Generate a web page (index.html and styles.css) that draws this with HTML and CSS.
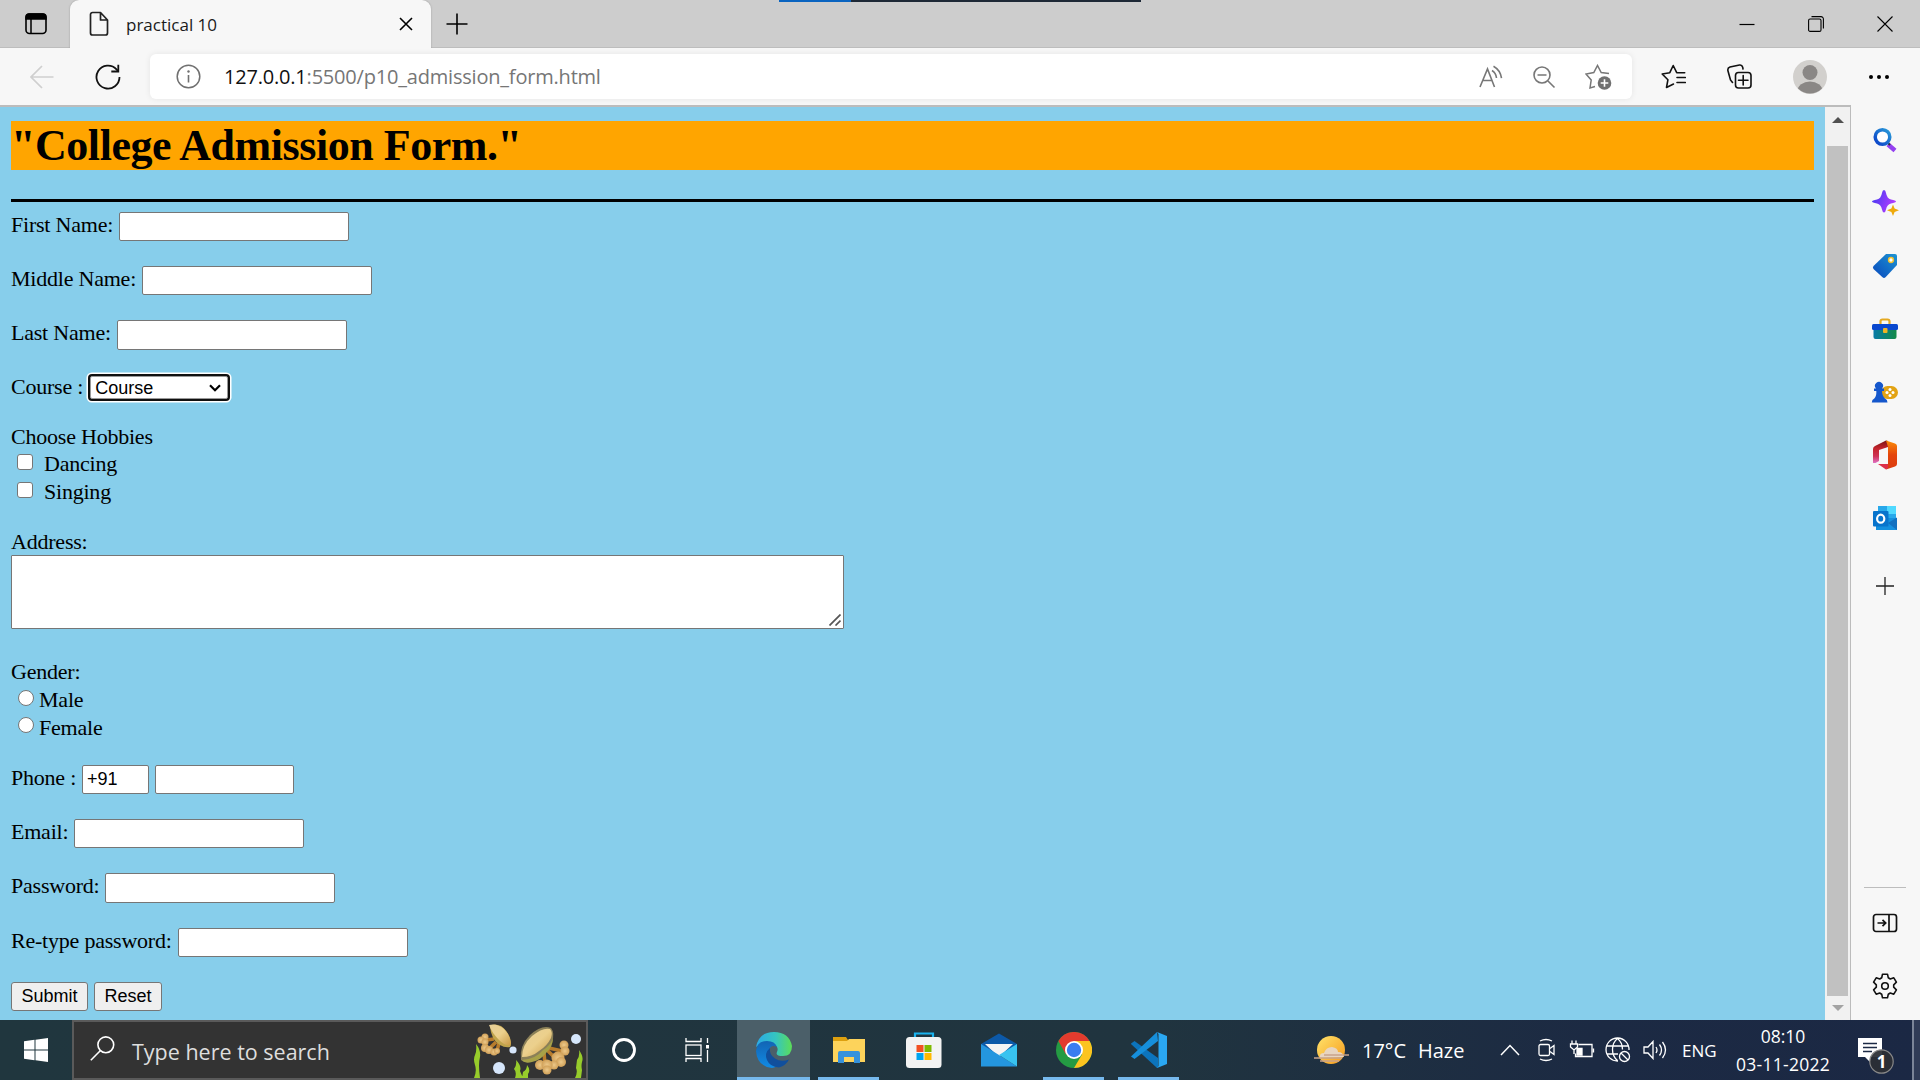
FILE: index.html
```html
<!DOCTYPE html>
<html lang="en">
<head>
<meta charset="utf-8">
<title>practical 10</title>
<link rel="stylesheet" href="styles.css">
</head>
<body>
<div class="screen">
  <header class="tabbar">
    <div class="tab-actions">
      <svg width="24" height="24" viewBox="0 0 24 24"><rect x="2" y="2" width="20" height="19.5" rx="3.5" fill="none" stroke="#000" stroke-width="1.6"/><path d="M2 7V5a3 3 0 0 1 3-3h14a3 3 0 0 1 3 3v2zM7 7v14" stroke="#000" stroke-width="1.5"/></svg>
    </div>
    <div class="tab">
      <svg class="doc" width="20" height="26" viewBox="0 0 20 26"><path d="M3.5 1.5h8l7 7.500v13a2 2 0 0 1-2 2h-13a2 2 0 0 1-2-2v-18.500a2 2 0 0 1 2-2zM11.500 1.500v7.500h7" fill="none" stroke="#222" stroke-width="1.7" stroke-linejoin="round"/></svg>
      <span class="tab-title">practical 10</span>
      <svg width="14" height="14" viewBox="0 0 14 14"><path d="M1 1l12 12M13 1L1 13" stroke="#000" stroke-width="1.6"/></svg>
    </div>
    <svg class="newtab" width="22" height="22" viewBox="0 0 22 22"><path d="M11 .5v21M.5 11h21" stroke="#000" stroke-width="1.6"/></svg>
    <div class="winctl">
      <svg width="16" height="16" viewBox="0 0 16 16"><path d="M.5 8.500h15" stroke="#000" stroke-width="1.200"/></svg>
      <svg width="16" height="16" viewBox="0 0 16 16"><rect x=".6" y="3" width="12.400" height="12.400" rx="1.500" fill="none" stroke="#000" stroke-width="1.100"/><path d="M3.500.6h9.500a2.400 2.400 0 0 1 2.400 2.400v9.500" fill="none" stroke="#000" stroke-width="1.100"/></svg>
      <svg width="16" height="16" viewBox="0 0 16 16"><path d="M.5.5l15 15M15.500.5l-15 15" stroke="#000" stroke-width="1.100"/></svg>
    </div>
    <div class="capture"></div>
  </header>

  <div class="toolbar">
    <svg class="back" width="24" height="24" viewBox="0 0 24 24"><path d="M23.500 12H1M12 1L1 12l11 11" fill="none" stroke="#cfcfcf" stroke-width="1.700"/></svg>
    <svg class="reload" width="26" height="26" viewBox="0 0 26 26"><path d="M24.500 13A11.500 11.500 0 1 1 21.500 5.300L23 7" fill="none" stroke="#111" stroke-width="1.800"/><path d="M23.300.8v6.700h-7" fill="none" stroke="#111" stroke-width="1.800"/></svg>
    <div class="address">
      <svg width="25" height="25" viewBox="0 0 25 25"><circle cx="12.500" cy="12.500" r="11.300" fill="none" stroke="#707070" stroke-width="1.500"/><path d="M12.500 11v7.500" stroke="#707070" stroke-width="1.600"/><circle cx="12.500" cy="7.500" r="1.200" fill="#707070"/></svg>
      <span class="url"><b>127.0.0.1</b>:5500/p10_admission_form.html</span>
      <div class="addr-icons">
        <svg width="24" height="24" viewBox="0 0 24 24" fill="none" stroke="#777" stroke-width="1.600"><path d="M1 22L8.500 4l7 18M3.800 15.500h9.400M13 5.500q4 2.500 4.500 7.500M14.500 1.200q7 4 8 12"/></svg>
        <svg width="24" height="24" viewBox="0 0 24 24" fill="none" stroke="#777" stroke-width="1.600"><circle cx="10" cy="10" r="8"/><path d="M16 16l6.500 6.500M5.500 10h9"/></svg>
        <svg width="27" height="26" viewBox="0 0 27 26"><path d="M10 22.500L5 24l1.200-8L1 10l7.800-1.400L12.500 1.500l3.700 7.100L24 9.500" fill="none" stroke="#777" stroke-width="1.500"/><circle cx="19.500" cy="19" r="6.800" fill="#707070"/><path d="M19.500 15.200v7.600M15.700 19h7.600" stroke="#fff" stroke-width="1.600"/></svg>
      </div>
    </div>
    <div class="tools">
      <svg width="25" height="25" viewBox="0 0 25 25" fill="none" stroke="#111" stroke-width="1.600" stroke-linejoin="round" stroke-linecap="round"><path d="M12.500 20L5.500 23.500l1.400-7.700L1.200 10l7.600-1.300L12.200 1.500l3.500 7.200h8M16 13.500h8.300M16 18.500h8.300"/></svg>
      <svg width="25" height="25" viewBox="0 0 25 25" fill="none" stroke="#111" stroke-width="1.600" stroke-linecap="round"><path d="M5.500 18.500L3.500 16 1 7q-.8-3 2-4l9.500-2q2.500-.4 3.200 2.200L16 5"/><rect x="8.500" y="8.500" width="15.500" height="15.500" rx="3"/><path d="M16.200 11.500v9.500M11.500 16.200H21"/></svg>
      <svg width="34" height="34" viewBox="0 0 34 34"><defs><clipPath id="av"><circle cx="17" cy="17" r="16.500"/></clipPath></defs><circle cx="17" cy="17" r="17" fill="#d2d0cd"/><g clip-path="url(#av)" fill="#8a8785"><circle cx="17" cy="12.500" r="7.500"/><ellipse cx="17" cy="31" rx="12.500" ry="9.500"/></g></svg>
      <svg width="20" height="6" viewBox="0 0 20 6"><circle cx="2" cy="3" r="2"/><circle cx="10" cy="3" r="2"/><circle cx="18" cy="3" r="2"/></svg>
    </div>
  </div>

  <div class="middle">
    <main class="page">
      <h1>"College Admission Form."</h1>
      <hr>
      <form class="form">
        <div class="row"><label>First Name:</label><input type="text"></div>
        <div class="row"><label>Middle Name:</label><input type="text"></div>
        <div class="row"><label>Last Name:</label><input class="tall" type="text"></div>
        <div class="row course"><label>Course :</label><div class="select"><span>Course</span><svg width="12" height="8" viewBox="0 0 12 8"><path d="M1 1.200l5 5 5-5" fill="none" stroke="#000" stroke-width="2.200"/></svg></div></div>
        <div class="row hobbies">Choose Hobbies</div>
        <div class="row check"><i class="box"></i><label>Dancing</label></div>
        <div class="row check last"><i class="box"></i><label>Singing</label></div>
        <div class="row addr">Address:</div>
        <div class="area-row"><div class="area"><svg width="12" height="12" viewBox="0 0 12 12"><path d="M.5 11.500L11.500.5M6.500 11.500l5-5" stroke="#555" stroke-width="1.700"/></svg></div></div>
        <div class="row line">Gender:</div>
        <div class="row radio"><i class="dot"></i><label>Male</label></div>
        <div class="row radio last"><i class="dot"></i><label>Female</label></div>
        <div class="row"><label>Phone :</label><input class="code" type="text" value="+91"><input class="phone" type="text"></div>
        <div class="row"><label>Email:</label><input type="text"></div>
        <div class="row pass"><label>Password:</label><input class="tall" type="text"></div>
        <div class="row"><label>Re-type password:</label><input type="text"></div>
        <div class="buttons"><button type="button" class="submit">Submit</button><button type="button" class="reset">Reset</button></div>
      </form>
    </main>
    <div class="scrollbar">
      <svg width="12" height="6" viewBox="0 0 12 6"><path d="M0 6L6 0l6 6z" fill="#505050"/></svg>
      <div class="thumb"></div>
      <svg width="12" height="6" viewBox="0 0 12 6"><path d="M0 0l6 6 6-6z" fill="#a3a3a3"/></svg>
    </div>
    <aside class="side">
      <div class="s"><svg width="26" height="26" viewBox="0 0 26 26"><defs><linearGradient id="g1" x1="1" y1="0" x2="0" y2="1"><stop offset="0" stop-color="#2a9bd8"/><stop offset="1" stop-color="#0a3fc8"/></linearGradient></defs><path d="M16 17.500l7 6" stroke="#9440f0" stroke-width="4.500"/><path d="M15 15l3 3" stroke="#333" stroke-width="2"/><circle cx="10.500" cy="10" r="7.300" fill="#fff" stroke="url(#g1)" stroke-width="3.500"/></svg></div>
      <div class="s"><svg width="28" height="28" viewBox="0 0 28 28"><defs><linearGradient id="g2" x1="0" y1="0" x2="1" y2=".4"><stop offset="0" stop-color="#3b3af0"/><stop offset="1" stop-color="#b13cff"/></linearGradient></defs><path d="M13 1q1.500 0 2 3 1 5.500 5 6.500 5 1 5 2t-5 2q-4 1-5 6-.6 3-2 3t-2-3q-1-5-5-6-5-1-5-2t5-2q4-1 5-6.500.5-3 2-3z" fill="url(#g2)"/><path d="M22 15.500l1.600 4 4.400 1.700-4.400 1.700-1.600 4-1.600-4-4.400-1.700 4.400-1.700z" fill="#efaa0c"/></svg></div>
      <div class="s"><svg width="26" height="26" viewBox="0 0 26 26"><defs><linearGradient id="g3" x1="1" y1="0" x2="0" y2="1"><stop offset="0" stop-color="#1e94d2"/><stop offset="1" stop-color="#0848bd"/></linearGradient></defs><path d="M14 1h9q2 0 2 2v9L13.500 24.300q-1.500 1.200-3 0L1.500 16q-1.200-1.500 0-3z" fill="url(#g3)"/><circle cx="19" cy="7" r="2.400" fill="#fff" stroke="#f2c230" stroke-width="1.500"/></svg></div>
      <div class="s"><svg width="28" height="22" viewBox="0 0 28 22"><defs><linearGradient id="g4"><stop offset="0" stop-color="#087aa8"/><stop offset="1" stop-color="#128a46"/></linearGradient></defs><path d="M9.500 7V3.500q0-2 2-2h5q2 0 2 2V7" fill="none" stroke="#e5a921" stroke-width="2.200"/><rect x="2.500" y="9" width="23" height="12" rx="2" fill="url(#g4)"/><rect x="1" y="6" width="26" height="6" rx="1.500" fill="#0a48ce"/><rect x="12" y="10" width="4.500" height="5" rx="1" fill="#f0b423"/></svg></div>
      <div class="s"><svg width="28" height="24" viewBox="0 0 28 24"><rect x="10" y="6" width="17" height="13" rx="6.500" fill="#e2a314"/><g fill="#fff"><circle cx="19" cy="9.500" r="1.500"/><circle cx="19" cy="15.500" r="1.500"/><circle cx="16" cy="12.500" r="1.500"/><circle cx="22" cy="12.500" r="1.500"/></g><path d="M5 8.500a4 4 0 1 1 6 0h2v2.500h-2q0 5 3 7.500 2.500 1 2.500 4H.8q0-3 2.500-4 2.500-2.500 2-7.500H3V8.500z" fill="#1557cc"/></svg></div>
      <div class="s"><svg width="26" height="30" viewBox="0 0 26 30"><defs><linearGradient id="g5" x1="0" y1="0" x2="0" y2="1"><stop offset="0" stop-color="#7c1414"/><stop offset=".35" stop-color="#c4242c"/><stop offset=".7" stop-color="#cf3457"/><stop offset="1" stop-color="#e072c4"/></linearGradient><linearGradient id="g6" x1="0" y1="0" x2="0" y2="1"><stop offset="0" stop-color="#fb8c08"/><stop offset=".5" stop-color="#e4450c"/><stop offset="1" stop-color="#dc3c10"/></linearGradient></defs><path d="M14 .5l2 .5v6L7 10v11l-3.500 2H1V9q0-2 2-3z" fill="url(#g5)"/><path d="M14 .5l9 3q2 .7 2 2.500v18q0 1.700-2 2.500l-9 3 2-3V7z" fill="url(#g6)"/><path d="M6 24h10v4l-2 1.500z" fill="#dc3049"/></svg></div>
      <div class="s"><svg width="26" height="26" viewBox="0 0 26 26"><path d="M6 1h18v14H6z" fill="#28a8ea"/><path d="M15 1h9v8h-9z" fill="#50d9ff"/><path d="M4 13h21v12H4z" fill="#1490df"/><path d="M16 18l9-5.500V25z" fill="#1270c0"/><rect x="1" y="6" width="15.500" height="15.500" rx="1" fill="#0874cc"/><ellipse cx="8.700" cy="13.700" rx="3.600" ry="4" fill="none" stroke="#fff" stroke-width="2.200"/></svg></div>
      <div class="s plus"><svg width="18" height="18" viewBox="0 0 18 18"><path d="M9 0v18M0 9h18" stroke="#222" stroke-width="1.300"/></svg></div>
      <div class="side-line"></div>
      <div class="s"><svg width="26" height="20" viewBox="0 0 26 20" fill="none" stroke="#111" stroke-width="1.700"><rect x="1.500" y="1.500" width="23" height="17" rx="2.500"/><path d="M17 1.500v17M5.500 10h8M10.500 6.800l3.200 3.200-3.200 3.200"/></svg></div>
      <div class="s"><svg width="26" height="26" viewBox="0 0 26 26" fill="none" stroke="#111" stroke-width="1.600" stroke-linejoin="round"><path d="M10.500 1.200h5l.8 3.600 2 1.200 3.500-1.200 2.600 4.400-2.700 2.600v2.400l2.700 2.600-2.600 4.400-3.500-1.200-2 1.200-.8 3.600h-5l-.8-3.600-2-1.200-3.500 1.200-2.600-4.400 2.700-2.600v-2.400L1.600 9.200l2.600-4.400L7.700 6l2-1.200z"/><circle cx="13" cy="13" r="3.300"/></svg></div>
    </aside>
  </div>

  <footer class="taskbar">
    <div class="start"><svg width="24" height="24" viewBox="0 0 24 24" fill="#fff"><path d="M0 3.300L10.500 1.800v9.700H0zM11.500 1.700L24 0v11.500H11.500zM0 12.500h10.500v9.700L0 20.700zM11.500 12.500H24V24l-12.500-1.700z"/></svg></div>
    <div class="search">
      <svg width="25" height="25" viewBox="0 0 25 25" fill="none" stroke="#fff" stroke-width="1.600"><circle cx="15.800" cy="8.800" r="7.900"/><path d="M10.500 14.500L.8 24.300"/></svg>
      <span>Type here to search</span>
      <svg class="mush" width="112" height="56" viewBox="0 0 112 56">
        <defs><linearGradient id="m1" x1="0" y1="0" x2="1" y2="1"><stop offset="0" stop-color="#e6cf97"/><stop offset=".5" stop-color="#ecd08c"/><stop offset="1" stop-color="#c99a45"/></linearGradient><radialGradient id="m2"><stop offset="0" stop-color="#edc98a"/><stop offset="1" stop-color="#d0a058"/></radialGradient></defs>
        <g stroke="#b87c2c" stroke-width="3.500"><path d="M20 17l-8 1M22 20l-6 6M25 21l-2 8M75 26l13 3M70 30l1 13M73 28l10 10"/></g>
        <g fill="url(#m2)"><circle cx="11" cy="15" r="3.500"/><circle cx="7" cy="18" r="3.500"/><circle cx="11" cy="20" r="3.500"/><circle cx="11" cy="26" r="4"/><circle cx="15" cy="28" r="4"/><circle cx="20" cy="30" r="3.500"/><circle cx="23" cy="29" r="3"/><circle cx="90" cy="23" r="4.500"/><circle cx="91" cy="29" r="4.500"/><circle cx="84" cy="36" r="6.500"/><circle cx="87" cy="40" r="5"/><circle cx="80" cy="43" r="4.500"/><circle cx="66" cy="43" r="5"/><circle cx="73" cy="43" r="5.500"/><circle cx="73" cy="48" r="4.500"/></g>
        <path d="M16 4q1 14 10 19 5 3 10 2 2-2 0-9-3-8-9-12-7-3-11 0z" fill="#c0a44c"/>
        <path d="M15 3q8-2 15 4 6 6 7 14 0 2-3 2-4 0-9-5-7-7-10-15z" fill="url(#m1)"/>
        <path d="M47 38Q45 24 56 13 68 2 77 6q4 5 1 14-5 12-20 19-7 3-11-1z" fill="#8b8058"/>
        <path d="M48 38q14-1 21-10 7-4 10-12 0 9-7 15-5 7-14 9-7 2-10-2z" fill="#a7a148"/>
        <path d="M48 35Q48 23 58 14 69 5 76 7q3 3 1 9-4 8-12 13-7 6-17 6z" fill="url(#m1)"/>
        <g fill="#97cc2b"><path d="M2 22q5 6 4 13-2 7 0 21H0q3-7 1-13t0-10q2-5 1-11zM42 38q6 6 4 11l3 7h-8q2-6-1-9 3-4 2-9zM53 43q4 5 1 9v4h-6l1-6q4-2 4-7zM105 28q5 7 3 12-1 4 0 8l-1 8h-6q3-6 1-10l1-8q3-4 2-10z"/></g>
        <g fill="#d6e6fb"><circle cx="39" cy="28" r="3.600"/><circle cx="25" cy="46" r="6"/><circle cx="102" cy="17" r="5"/></g>
      </svg>
    </div>
    <div class="tb cortana"><svg width="26" height="26" viewBox="0 0 26 26"><circle cx="13" cy="13" r="10.500" fill="none" stroke="#fff" stroke-width="2.800"/></svg></div>
    <div class="tb taskview"><svg width="26" height="24" viewBox="0 0 26 24" fill="none" stroke="#fff" stroke-width="1.300"><path d="M2 0v3.500h15V0M2 24v-3.500h15V24M23.500 0v5M23.500 12v12"/><rect x="2" y="7" width="15" height="10.500"/><path d="M23.500 7v3.500" stroke-width="3"/></svg></div>
    <div class="tb open active"><svg width="36" height="36" viewBox="0 0 36 36"><defs><linearGradient id="e1"><stop offset="0" stop-color="#2ba9e8"/><stop offset=".55" stop-color="#35c5c0"/><stop offset="1" stop-color="#5cdd58"/></linearGradient><linearGradient id="e2" x1="0" y1="0" x2="0" y2="1"><stop offset="0" stop-color="#1264b4"/><stop offset="1" stop-color="#118be4"/></linearGradient></defs><path d="M0 15Q3 0 18 0t18 14q0 10-9 10-8 0-6-4 2-5-2-7Q9 6 0 15z" fill="url(#e1)"/><path d="M0 19Q1 9 11 9q8 0 10 6-6-3-8 3-2 9 8 16-3 2-5 2Q1 34 0 19z" fill="url(#e2)"/><path d="M14 16q-6 5-3 12 3 7 12 7.500 7-2 10-8-8 3-14-1-6-4-5-10.500z" fill="#114f9c"/></svg></div>
    <div class="tb open"><svg width="32" height="28" viewBox="0 0 32 28"><path d="M0 1h13l2 3h17v22H0z" fill="#dda00f"/><path d="M0 5h14l2-2h16v23H0z" fill="#fdd35b"/><path d="M5 27V17q0-2 2-2h18q2 0 2 2v10h-6v-6H11v6z" fill="#3692dc"/></svg></div>
    <div class="tb"><svg width="36" height="36" viewBox="0 0 36 36"><path d="M9 7V1.500h18V7" fill="none" stroke="#1bb3ee" stroke-width="2.200"/><rect y="5" width="35.500" height="31" rx="3.500" fill="#f3f3f3"/><path fill="#f25022" d="M10.500 13h7v7h-7z"/><path fill="#7fba00" d="M18.500 13h7v7h-7z"/><path fill="#00a4ef" d="M10.500 21h7v7h-7z"/><path fill="#ffb900" d="M18.500 21h7v7h-7z"/></svg></div>
    <div class="tb"><svg width="36" height="36" viewBox="0 0 36 36"><path d="M0 12L18 1.500 36 12v8H0z" fill="#0c59a8"/><path d="M4 12h28L18 25z" fill="#f4f4f4"/><path d="M0 12v22.500h36L18 23z" fill="#2496df"/><path d="M36 12v22.500L18 23z" fill="#38c3f0"/></svg></div>
    <div class="tb open"><svg width="36" height="36" viewBox="0 0 36 36"><circle cx="18" cy="18" r="18" fill="#249b43"/><path d="M2.400 9A18 18 0 0 1 33.600 9H18l-8 13.500z" fill="#e33b2e"/><path d="M18 9h15.600A18 18 0 0 1 18 36l8-13.500z" fill="#fcc41f"/><circle cx="18" cy="18" r="9" fill="#fff"/><circle cx="18" cy="18" r="7.200" fill="#3a7df0"/></svg></div>
    <div class="tb open"><svg width="36" height="36" viewBox="0 0 36 36"><path d="M0 11.500L3.500 9 27 26v9.500l-1 .5L.5 12.500z" fill="#0c74bc"/><path d="M0 24.500L26 0l1 9L3.500 27z" fill="#168fdb"/><path d="M26 0l10 4v28l-10 4 1.500-2V2z" fill="#2aa7f2"/></svg></div>
    <div class="tray">
      <svg class="weather" width="36" height="30" viewBox="0 0 36 30"><defs><linearGradient id="w" x1="0" y1="0" x2="1" y2="1"><stop offset="0" stop-color="#ffe36b"/><stop offset="1" stop-color="#f79a1b"/></linearGradient></defs><circle cx="17" cy="15" r="14" fill="url(#w)"/><path d="M6 23q-1-5 4-5 2-6 8-6 6 1 6 5 5 0 6 5z" fill="#e8d5c0"/><path d="M0 23h28M10 20h25M6 26h19" stroke="#c7a38a" stroke-width="1.700"/></svg>
      <span class="temp">17°C</span><span class="haze">Haze</span>
      <svg class="caret" width="20" height="12" viewBox="0 0 20 12"><path d="M1 11l9-9.500L19 11" fill="none" stroke="#fff" stroke-width="1.500"/></svg>
      <svg class="cam" width="20" height="24" viewBox="0 0 20 24" fill="none" stroke="#fff" stroke-width="1.300"><rect x="2" y="6.500" width="10.500" height="11" rx="1.500"/><path d="M13 10.500l4-3v9l-4-3M3 3q6-3 12 0M3 21q6 3 12 0"/></svg>
      <svg class="bat" width="26" height="20" viewBox="0 0 26 20" fill="none" stroke="#fff" stroke-width="1.300"><path d="M9.500 4.500h13.500v12H6.500v-3M24.500 8.500v4M3 .5v3M7 .5v3M1.500 4h7v3l-3.500 3-3.500-3zM5 10v4"/><path d="M8 8.500h5v6.500H8z" fill="#fff"/></svg>
      <svg class="globe" width="26" height="26" viewBox="0 0 26 26" fill="none" stroke="#fff" stroke-width="1.300"><path d="M24 13A11.500 11.500 0 1 0 13 24M2 9h22M2 17h11M12.500 1.500q-5 4-5 11t5 11M12.500 1.500q5 4 5 11"/><circle cx="19.500" cy="19.500" r="5"/><path d="M16 16l7 7"/></svg>
      <svg class="vol" width="24" height="20" viewBox="0 0 24 20" fill="none" stroke="#fff" stroke-width="1.300"><path d="M1 7h4l5-5.500v17L5 13H1zM13 7q2 3 0 6M16.500 4.500q4 5.500 0 11M19.500 2q6 8 0 16"/></svg>
      <span class="eng">ENG</span>
      <div class="clock"><span>08:10</span><span class="date">03-11-2022</span></div>
      <svg class="note" width="37" height="38" viewBox="0 0 37 38"><path d="M0 0h24v19H13l-1 5-5-5H0z" fill="#fff"/><path d="M5 5.500h14M5 9.500h14M5 13.500h9" stroke="#1c2a45" stroke-width="1.300"/><circle cx="23.500" cy="23.500" r="11.700" fill="#2c2f35" fill-opacity=".94" stroke="#888" stroke-width="1.200"/><text class="count" x="23.500" y="29.500" text-anchor="middle">1</text></svg>
      <div class="desktop"></div>
    </div>
  </footer>
</div>
</body>
</html>
```
FILE: styles.css
```css
* { box-sizing: border-box; }
body { margin: 0; font-family: "Open Sans", "Noto Sans", sans-serif; overflow: hidden; }
svg { display: block; flex: none; }
.screen { width: 1920px; height: 1080px; display: flex; flex-direction: column; background: #f7f7f7; }

.tabbar { position: relative; height: 48px; flex: none; display: flex; align-items: center; background: #cdcdcd; box-shadow: inset 0 -1px #bdbdbd; }
.tab-actions { width: 70px; padding-left: 24px; }
.tab { width: 361px; height: 48px; display: flex; align-items: center; padding: 0 18px 0 19px; background: #f7f7f7; border-radius: 9px 9px 0 0; box-shadow: 0 0 2px #999; clip-path: inset(0 -3px 0 -3px); }
.tab-title { flex: 1; margin-left: 17px; font-size: 17px; color: #1a1a1a; }
.newtab { margin-left: 15px; }
.winctl { margin-left: auto; margin-right: 27px; display: flex; gap: 53px; }
.capture { position: absolute; left: 779px; top: 0; width: 362px; height: 2px; background: linear-gradient(90deg, #0a64c0 72px, #1d2836 72px); }

.toolbar { height: 57px; flex: none; display: flex; align-items: center; }
.back { margin-left: 30px; }
.reload { margin-left: 41px; }
.address { width: 1482px; height: 45px; margin-left: 29px; padding: 0 20px 0 26px; display: flex; align-items: center; background: #fff; border-radius: 6px; box-shadow: 0 0 6px rgba(0,0,0,.08); }
.url { margin-left: 23px; font-size: 20px; letter-spacing: -.2px; color: #767676; white-space: nowrap; }
.url b { font-weight: 400; color: #111; }
.addr-icons { margin-left: auto; display: flex; align-items: center; gap: 29px; }
.tools { flex: 1; display: flex; align-items: center; padding-left: 29px; gap: 41px; }
.tools svg:nth-child(4) { margin-left: 1px; }

.middle { height: 915px; flex: none; display: flex; }
.page { width: 1825px; height: 915px; border-top: 2px solid #bcbcbc; background: #87ceeb; padding: 14px 11px 0; font: 22px/25px "Liberation Serif", serif; letter-spacing: -.22px; color: #000; }
h1 { margin: 0; height: 49px; font: bold 44px/49px "Liberation Serif", serif; letter-spacing: -.45px; background: #ffa500; }
hr { margin: 29px 0 10px; height: 3px; border: 0; background: #000; }
.row { height: 54px; display: flex; align-items: flex-start; gap: 6px; white-space: nowrap; }
input { width: 230px; height: 29px; margin: 0; padding: 1px 4px; border: 1px solid #767676; border-radius: 2px; background: #fff; font: 18px "Liberation Sans", sans-serif; }
.tall { height: 30px; }
.code { width: 67px; }
.phone { width: 139px; }
.course { height: 50px; gap: 7px; }
.select { width: 138px; height: 23px; margin: 2px 0 0; padding: 0 6px 0 4px; display: flex; align-items: center; justify-content: space-between; border: 1px solid #999; border-radius: 2px; background: #fff; box-shadow: 0 0 0 2px #101010, 0 0 0 3.500px #fff; font: 18px/20px "Liberation Sans", sans-serif; letter-spacing: 0; }
.hobbies { height: 27px; }
.line, .radio { height: 28px; }
.check { height: 28px; gap: 11px; padding-left: 6px; }
.radio { gap: 5px; padding-left: 7px; }
.last { height: 50px; }
.addr { height: 26px; }
.box, .dot { flex: none; width: 16px; height: 16px; margin-top: 3px; border: 1px solid #767676; border-radius: 3px; background: #fff; }
.dot { border-radius: 50%; }
.last .dot { margin-top: 2px; }
.area-row { height: 104px; }
.area { width: 833px; height: 74px; padding: 0 2px 2px 0; display: flex; align-items: flex-end; justify-content: flex-end; border: 1px solid #767676; border-radius: 1px; background: #fff; }
.pass { height: 55px; }
.buttons { display: flex; gap: 6px; }
button { height: 29px; padding: 0; border: 1px solid #767676; border-radius: 3px; background: #efefef; font: 18px "Liberation Sans", sans-serif; color: #000; }
.submit { width: 77px; }
.reset { width: 68px; }

.scrollbar { width: 26px; display: flex; flex-direction: column; align-items: center; background: #f1f1f1; border-top: 2px solid #bcbcbc; border-right: 1px solid #bcbcbc; padding: 10px 0 9px; }
.thumb { flex: 1; width: 21px; margin: 23px 0 9px; background: #c1c1c1; }
.side { width: 69px; display: flex; flex-direction: column; align-items: center; padding: 3px 1px 3px 0; }
.s { height: 63px; display: flex; align-items: center; }
.plus { margin-top: 5px; }
.side-line { width: 42px; height: 1px; margin: auto 0 3px; background: #bdbdbd; }

.taskbar { height: 60px; flex: none; display: flex; background: linear-gradient(90deg, #20363e, #20343f 60%, #1c2a43 83%, #1b2844); color: #fff; }
.start { width: 72px; display: flex; align-items: center; padding-left: 24px; }
.search { width: 516px; padding-left: 16px; display: flex; align-items: center; background: #333; border: 2px solid #5a5a5a; }
.search span { flex: 1; margin-left: 17px; padding-top: 2px; font-size: 21.500px; color: #dedede; white-space: nowrap; }
.search svg:first-child { margin-top: -4px; }
.tb { width: 75px; display: flex; justify-content: center; align-items: center; border-bottom: 3px solid transparent; padding-top: 3px; }
.tb.cortana { width: 72px; }
.tb.taskview { width: 73px; }
.tb.open { background: linear-gradient(#76b9ed, #76b9ed) center bottom / 61px 3px no-repeat border-box; }
.tb.open.active { background: #4b5f69; border-bottom-color: #76b9ed; width: 73px; margin: 0 1px 0 4px; }
.tray { margin-left: auto; display: flex; align-items: center; white-space: nowrap; }
.temp, .haze { font-size: 20px; }
.temp { width: 42px; margin-left: 12px; }
.haze { width: 45px; margin-left: 14px; }
.caret { margin-left: 37px; }
.cam { margin-left: 17px; }
.bat { margin-left: 12px; }
.globe { margin-left: 10px; }
.vol { margin-left: 12px; }
.eng { width: 35px; margin-left: 15px; font-size: 17px; }
.clock { width: 96px; margin-left: 18px; display: flex; flex-direction: column; align-items: center; font-size: 17.500px; line-height: 28px; padding-bottom: 1px; }
.date { letter-spacing: .25px; }
.note { margin-left: 27px; margin-top: 14px; }
.count { font: bold 17px "Open Sans", sans-serif; fill: #fff; }
.desktop { width: 8px; height: 60px; margin-left: 17px; background: #303c57; border-left: 2px solid #7b8598; }
```
